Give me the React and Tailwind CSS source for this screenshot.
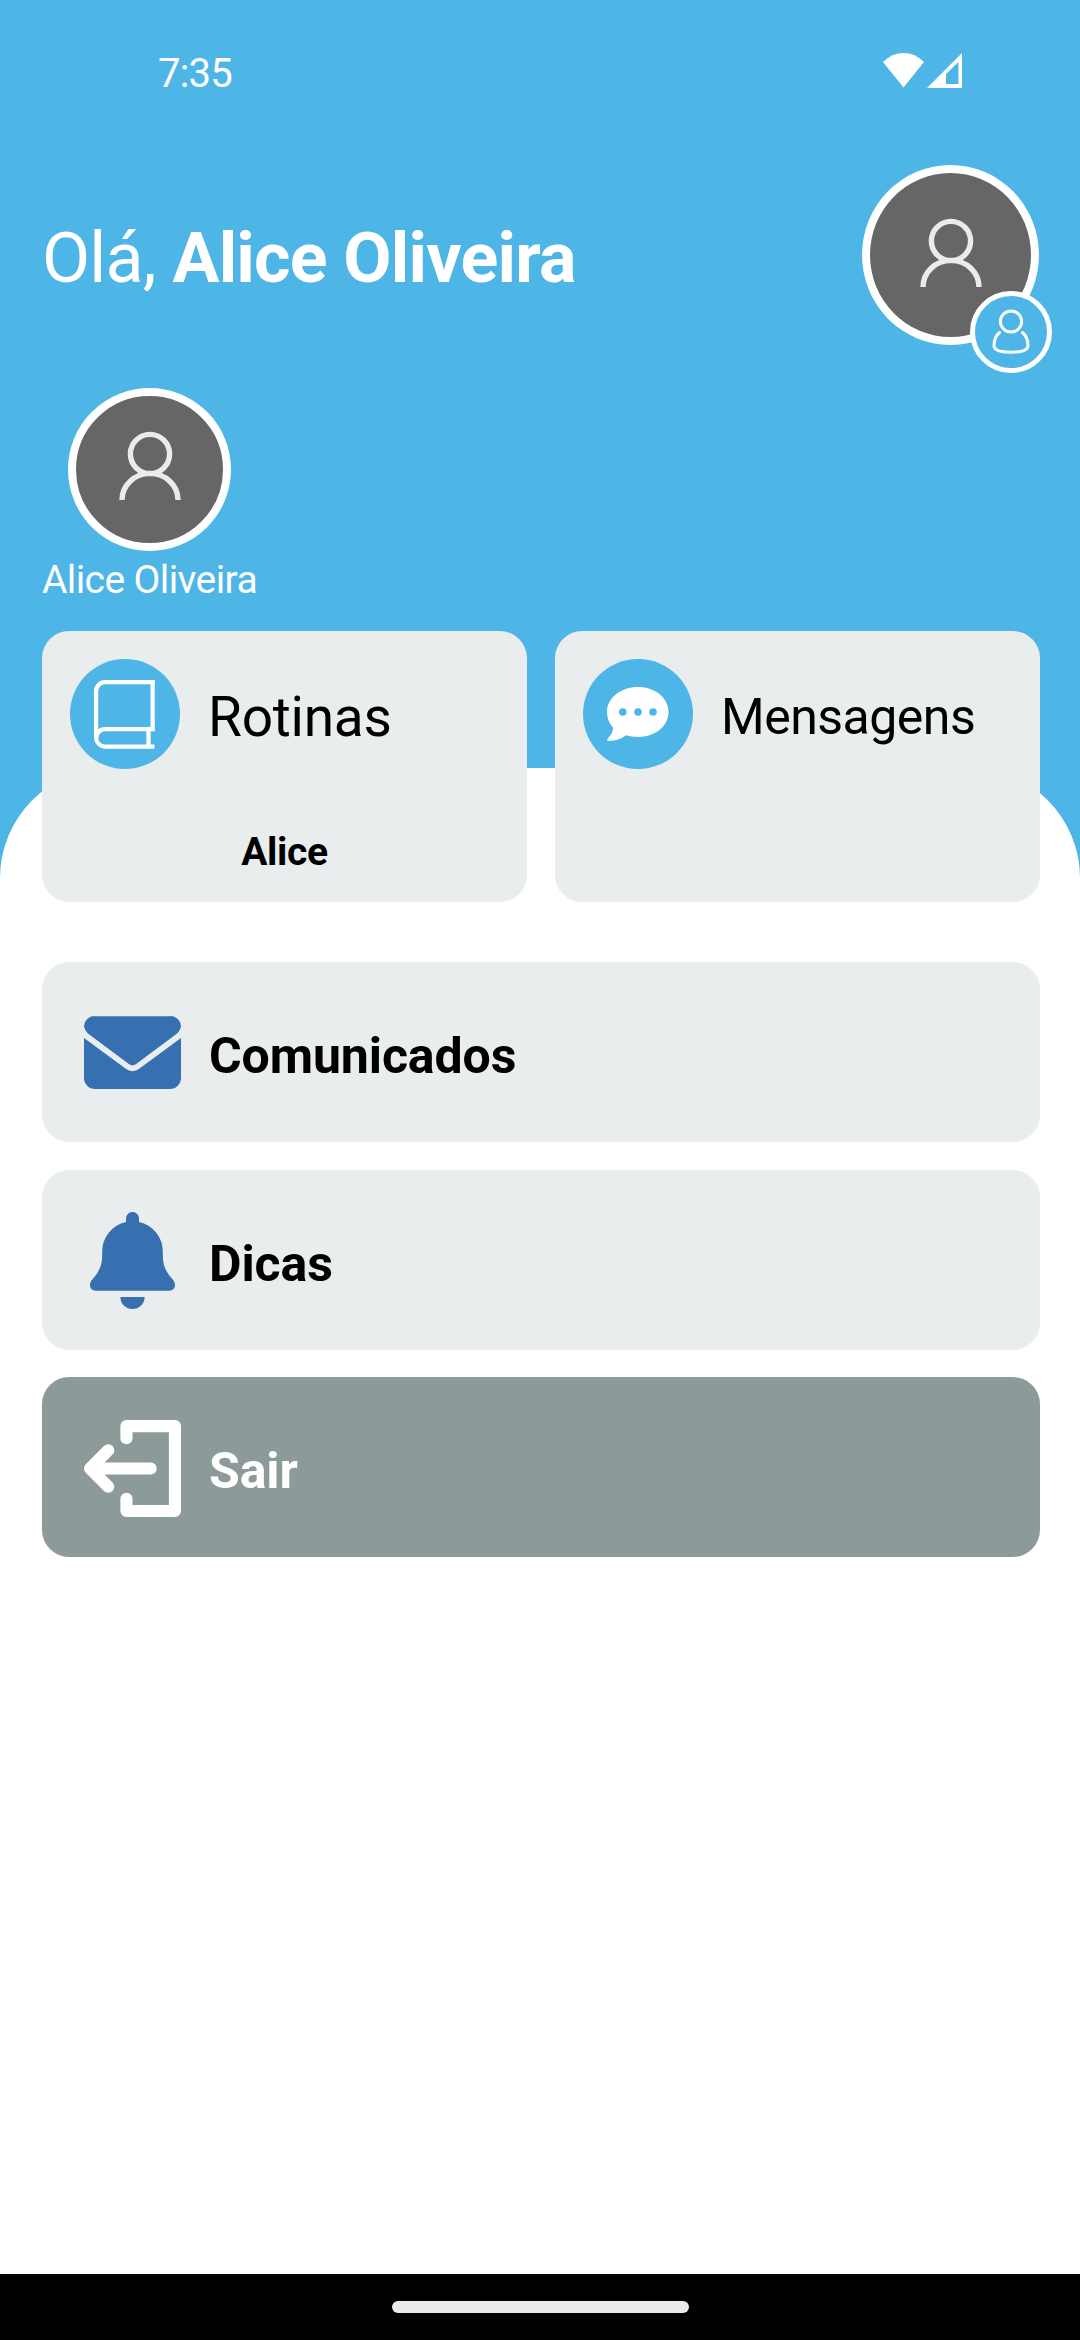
import React from 'react';

const PersonIcon = () => (
    <svg className="w-16 h-[69px]" viewBox="0 0 64 69" fill="none" stroke="#ebebeb" strokeWidth="5.4">
        <circle cx="32" cy="23" r="19.6" />
        <path d="M4 69A28 26.6 0 0 1 60 69" />
    </svg>
);

const BookIcon = () => (
    <svg className="w-[62px] h-[69px]" viewBox="0 0 62 69" fill="none" stroke="#fff" strokeWidth="4.2">
        <path d="M60.9 2.1H11A8.9 8.9 0 0 0 2.1 11V58A8.9 8.9 0 0 0 11 66.6H60.5" />
        <path d="M58.6 2V50M60.9 49.2H11A8.7 8.7 0 0 0 2.3 58M54.5 50V66" />
    </svg>
);

const ChatIcon = () => (
    <svg className="w-[62px] h-[54px]" viewBox="0 0 62 54">
        <path
            fill="#fff"
            d="M31 0C48 0 61.5 10.8 61.5 25S48 50 31 50C26.8 50 22.7 49.5 19 48.3C14.3 52 8.5 54 2 54C0 54 -.4 52.5 1 51.2C4 48.3 6.2 44.5 6 40.5C2.2 36.4 0 31 0 25C0 10.8 14 0 31 0Z"
        />
        <g fill="#4eb5e7">
            <circle cx="15.8" cy="25" r="3.8" />
            <circle cx="31" cy="25" r="3.8" />
            <circle cx="46" cy="25" r="3.8" />
        </g>
    </svg>
);

const MailIcon = () => (
    <svg className="w-[97px] h-[97px]" viewBox="0 0 16 16" fill="#3770b0">
        <path d="M0 3.6A1.7 1.7 0 0 1 1.7 2H14.3A1.7 1.7 0 0 1 16 3.6A2 2 0 0 1 15.3 4.9L8.6 9.9a1 1 0 0 1-1.2 0L.7 4.9A2 2 0 0 1 0 3.6Z" />
        <path d="M0 5.6V12.2A1.8 1.8 0 0 0 1.8 14H14.2A1.8 1.8 0 0 0 16 12.2V5.6L9.1 10.7a1.8 1.8 0 0 1-2.2 0Z" />
    </svg>
);

const BellIcon = () => (
    <svg className="w-[97px] h-[97px]" viewBox="0 0 16 16" fill="#3770b0">
        <path d="M8 16a2 2 0 0 0 2-2H6a2 2 0 0 0 2 2z" />
        <path d="M8 0A1.05 1.05 0 0 0 6.93 1.1V1.65A5 5 0 0 0 3 6.6C3 8.3 2.95 9.3 1.4 11.1C1 11.6 1 11.8 1 12.1C1 12.6 1.35 13 1.9 13H14.1C14.65 13 15 12.6 15 12.1C15 11.8 15 11.6 14.6 11.1C13.05 9.3 13 8.3 13 6.6A5 5 0 0 0 9.07 1.65V1.1A1.05 1.05 0 0 0 8 0Z" />
    </svg>
);

const ExitIcon = () => (
    <svg className="w-[97px] h-[97px] mt-[2px]" viewBox="0 0 16 16" fill="none" stroke="#fff" strokeWidth="2" strokeLinecap="round" strokeLinejoin="round">
        <path d="M7 3V1H15V15H7V13" />
        <path d="M11 8H1M4 5L1 8L4 11" />
    </svg>
);

const ROWS = [
    { label: 'Comunicados', icon: MailIcon, className: 'bg-[#e9eded] text-black mb-7' },
    { label: 'Dicas', icon: BellIcon, className: 'bg-[#e9eded] text-black mb-[27px]' },
    { label: 'Sair', icon: ExitIcon, className: 'bg-[#8d9a9a] text-white' },
];

const App = () => {
    return (
        <div className="w-[1080px] h-[2340px] flex flex-col overflow-hidden bg-[#4eb5e7] font-[Roboto,sans-serif]">
            <header className="h-[768px] shrink-0 text-white">
                {/* Status bar */}
                <div className="h-[165px] pt-[49px] pl-[158px] pr-[118px] flex justify-between items-start">
                    <span className="text-[40px] leading-[47px] tracking-[-0.8px] mt-px">7:35</span>
                    <div className="flex gap-[3px] pt-1">
                        <svg className="w-[41px] h-[35px]" viewBox="0 0 41 35" fill="#fff">
                            <path d="M0 9Q9 0 20.5 0T41 9L20.5 34.5Z" />
                        </svg>
                        <svg className="w-[35px] h-[35px]" viewBox="0 0 35 35" fill="#fff">
                            <path fillRule="evenodd" d="M35 0V35H0ZM31.4 9L19 21V31H31.4Z" />
                        </svg>
                    </div>
                </div>

                {/* Greeting */}
                <div className="flex justify-between items-start pl-[42px] pr-[41px]">
                    <h1 className="text-[70px] leading-[82px] tracking-[-0.8px] mt-[52px] whitespace-nowrap">
                        Olá, <b className="font-bold">Alice Oliveira</b>
                    </h1>
                    <div className="relative w-[177px] h-[180px] rounded-[50%] border-8 border-white bg-[#666] flex justify-center pt-[45px]">
                        <PersonIcon />
                        <div className="absolute left-[100px] top-[118px] w-[82px] h-[82px] rounded-full border-[5.5px] border-white bg-[#4eb5e7] flex justify-center pt-[13px]">
                            <svg className="w-[38px] h-[45px]" viewBox="0 0 38 45" fill="none" stroke="#fff" strokeWidth="3">
                                <circle cx="19" cy="12.5" r="10.6" />
                                <path strokeLinecap="round" d="M7.5 23.5C4 26.5 2 31 2 36.5C2 41 9 43.2 19 43.2S36 41 36 36.5C36 31 34 26.5 30.5 23.5" />
                            </svg>
                        </div>
                    </div>
                </div>

                {/* Students */}
                <div className="inline-flex flex-col items-center ml-[42px] mt-[43px]">
                    <div className="w-[163px] h-[163px] rounded-full border-8 border-white bg-[#666] flex justify-center pt-[35px]">
                        <PersonIcon />
                    </div>
                    <span className="text-[39px] leading-[46px] tracking-[-0.6px] mt-[6px]">Alice Oliveira</span>
                </div>
            </header>

            <main className="flex-1 bg-white rounded-t-[110px] pl-[42px] pr-[40px]">
                <div className="flex gap-7 -mt-[137px] mb-[60px]">
                    <div className="flex-1 h-[271px] rounded-[27px] bg-[#e9eded] p-7">
                        <div className="flex items-center">
                            <div className="w-[110px] h-[110px] rounded-full bg-[#4eb5e7] flex items-center justify-center">
                                <BookIcon />
                            </div>
                            <span className="text-[55px] leading-[64px] tracking-[-0.25px] ml-7 mt-[6px]">Rotinas</span>
                        </div>
                        <div className="text-center text-[39px] leading-[46px] tracking-[-0.3px] font-bold mt-[60px]">Alice</div>
                    </div>
                    <div className="flex-1 h-[271px] rounded-[27px] bg-[#e9eded] p-7">
                        <div className="flex items-center">
                            <div className="w-[110px] h-[110px] rounded-full bg-[#4eb5e7] flex items-center justify-center">
                                <ChatIcon />
                            </div>
                            <span className="text-[50px] leading-[58px] tracking-[-0.5px] ml-7 mt-[6px]">Mensagens</span>
                        </div>
                    </div>
                </div>

                {ROWS.map(({ label, icon: Icon, className }) => (
                    <div key={label} className={`h-[180px] rounded-[27px] flex items-center pl-[42px] ${className}`}>
                        <Icon />
                        <span className="text-[50px] leading-[58px] tracking-[-0.1px] font-bold ml-7 mt-[8px]">{label}</span>
                    </div>
                ))}
            </main>

            {/* Gesture bar */}
            <div className="h-[66px] shrink-0 bg-black flex justify-center pt-[27px]">
                <div className="w-[297px] h-3 rounded-full bg-[#ebebeb]"></div>
            </div>
        </div>
    );
};

export default App;
